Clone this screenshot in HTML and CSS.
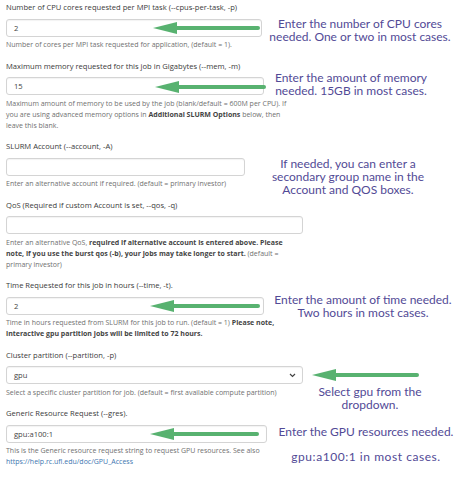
FILE: index.html
```html
<!DOCTYPE html>
<html lang="en">
<head>
<meta charset="utf-8">
<title>Job options</title>
<link rel="stylesheet" href="styles.css">
</head>
<body>
<main class="form">
  <div class="group">
    <label class="label">Number of CPU cores requested per MPI task (--cpus-per-task, -p)</label>
    <div class="field w-cpu">2</div>
    <p class="help">Number of cores per MPI task requested for application, (default = 1).</p>
  </div>
  <div class="group">
    <label class="label">Maximum memory requested for this job in Gigabytes (--mem, -m)</label>
    <div class="field w-mem">15</div>
    <p class="help">Maximum amount of memory to be used by the job (blank/default = 600M per CPU). If<br>you are using advanced memory options in <b>Additional SLURM Options</b> below, then<br>leave this blank.</p>
  </div>
  <div class="group">
    <label class="label">SLURM Account (--account, -A)</label>
    <div class="field w-acct"></div>
    <p class="help">Enter an alternative account if required. (default = primary investor)</p>
  </div>
  <div class="group">
    <label class="label">QoS (Required if custom Account is set, --qos, -q)</label>
    <div class="field w-qos"></div>
    <p class="help">Enter an alternative QoS, <b>required if alternative account is entered above. Please<br>note, if you use the burst qos (-b), your jobs may take longer to start.</b> (default =<br>primary investor)</p>
  </div>
  <div class="group">
    <label class="label">Time Requested for this job in hours (--time, -t).</label>
    <div class="field w-time">2</div>
    <p class="help">Time in hours requested from SLURM for this job to run. (default = 1) <b>Please note,<br>interactive gpu partition jobs will be limited to 72 hours.</b></p>
  </div>
  <div class="group">
    <label class="label">Cluster partition (--partition, -p)</label>
    <div class="field select w-part"><span>gpu</span><svg class="chev" width="7" height="5" viewBox="0 0 7 5"><path d="M1 1 L3.5 3.5 L6 1" fill="none" stroke="#444" stroke-width="1.2"/></svg></div>
    <p class="help">Select a specific cluster partition for job. (default = first available compute partition)</p>
  </div>
  <div class="group">
    <label class="label">Generic Resource Request (--gres).</label>
    <div class="field w-gres">gpu:a100:1</div>
    <p class="help">This is the Generic resource request string to request GPU resources. See also<br><a class="link">https://help.rc.ufl.edu/doc/GPU_Access</a></p>
  </div>
</main>

<svg class="arrows" width="465" height="480" viewBox="0 0 465 480">
  <g stroke="#58b270" stroke-width="4" stroke-linecap="round" fill="#58b270">
    <line x1="170" y1="28" x2="258" y2="28"/>
    <polygon points="153,28 177,22 177,34" stroke="none"/>
    <line x1="172" y1="87" x2="264" y2="87"/>
    <polygon points="155,87 179,81 179,93" stroke="none"/>
    <line x1="167" y1="306" x2="258" y2="306"/>
    <polygon points="150,306 174,300 174,312" stroke="none"/>
    <line x1="329" y1="375" x2="417" y2="375"/>
    <polygon points="312,375 336,369 336,381" stroke="none"/>
    <line x1="167" y1="434" x2="257" y2="434"/>
    <polygon points="150,434 174,428 174,440" stroke="none"/>
  </g>
</svg>

<div class="note n1">Enter the number of CPU cores<br>needed. One or two in most cases.</div>
<div class="note n2">Enter the amount of memory<br>needed. 15GB in most cases.</div>
<div class="note n3">If needed, you can enter a<br>secondary group name in the<br>Account and QOS boxes.</div>
<div class="note n4">Enter the amount of time needed.<br>Two hours in most cases.</div>
<div class="note n5">Select gpu from the<br>dropdown.</div>
<div class="note n6">Enter the GPU resources needed.</div>
<div class="note n7">gpu:a100:1 in most cases.</div>
</body>
</html>
```
FILE: styles.css
```css
html, body {
  margin: 0;
  padding: 0;
  background: #ffffff;
}
body {
  width: 465px;
  height: 480px;
  position: relative;
  overflow: hidden;
  font-family: "Open Sans", "Noto Sans", sans-serif;
  color: #333;
}
.form {
  padding: 1px 0 0 6px;
  display: flex;
  flex-direction: column;
  gap: 9.5px;
}
.group {
  display: flex;
  flex-direction: column;
  align-items: flex-start;
}
.label {
  font-size: 7.6px;
  line-height: 12px;
  color: #3a3a3a;
  margin-bottom: 5.5px;
  white-space: nowrap;
}
.field {
  box-sizing: border-box;
  height: 18px;
  border: 1px solid #d4d4d4;
  border-radius: 3px;
  padding: 0 7px;
  font-size: 7.6px;
  line-height: 16px;
  color: #444;
  box-shadow: inset 0 1px 1px rgba(0,0,0,0.05);
}
.select {
  display: flex;
  align-items: center;
  justify-content: space-between;
  padding-right: 6px;
}
.chev { display: block; }
.w-cpu { width: 256px; }
.w-mem { width: 258px; }
.w-acct { width: 239px; }
.w-qos { width: 297px; }
.w-time { width: 258px; }
.w-part { width: 297px; }
.w-gres { width: 261px; }
.help {
  margin: 2.5px 0 0;
  font-size: 7px;
  line-height: 11px;
  color: #707070;
  white-space: nowrap;
}
.help b {
  color: #444;
  font-weight: 700;
}
.link { color: #3d76b0; }
.arrows {
  position: absolute;
  left: 0;
  top: 0;
}
.note {
  position: absolute;
  width: 220px;
  text-align: center;
  font-family: Lato, "Open Sans", sans-serif;
  font-size: 12px;
  line-height: 13px;
  color: #524a96;
  white-space: nowrap;
}
.n1 { left: 250px; top: 17px; }
.n2 { left: 241px; top: 71px; }
.n3 { left: 238px; top: 157px; }
.n4 { left: 253px; top: 293px; }
.n5 { left: 260px; top: 385px; }
.n6 { left: 256px; top: 425px; }
.n7 { left: 256px; top: 450px; letter-spacing: 0.55px; }
```
